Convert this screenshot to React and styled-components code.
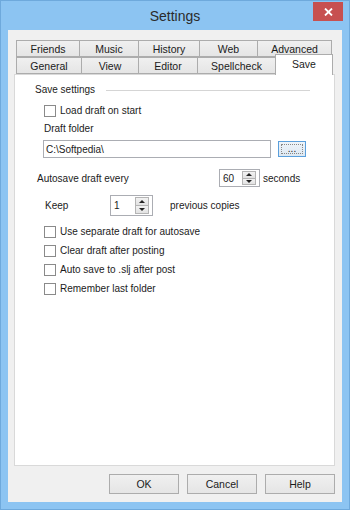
import React from "react"
import styled, { createGlobalStyle } from "styled-components"

const GlobalStyle = createGlobalStyle`
    html, body {
        margin: 0;
        padding: 0;
        background: #8cc4f2;
    }
    body {
        font-family: "Liberation Sans", Arial, sans-serif;
        font-size: 10px;
        color: #1b1b1b;
    }
`

const Window = styled.div`
    width: 350px;
    height: 510px;
    box-sizing: border-box;
    background: #8cc4f2;
    border: 1px solid #6ea9dc;
    display: flex;
    flex-direction: column;
`

const TitleBar = styled.div`
    position: relative;
    height: 29px;
    display: flex;
    align-items: center;
    justify-content: center;
`

const Title = styled.div`
    font-size: 14px;
    color: #2b2b2b;
    margin-top: 1px;
`

const CloseButton = styled.div`
    position: absolute;
    top: 1px;
    right: 6px;
    width: 30px;
    height: 19px;
    background: #c75050;
    display: flex;
    align-items: center;
    justify-content: center;
`

const Client = styled.div`
    flex: 1;
    margin: 0 7px 7px 7px;
    background: #f0f0f0;
    padding: 10px 6px 0 6px;
    display: flex;
    flex-direction: column;
`

const TabStrip = styled.div`
    width: 321px;
    display: flex;
    flex-direction: column;
`

const TabRow = styled.div`
    height: 17px;
    display: flex;
    align-items: flex-end;
    padding-left: 2px;
`

const Tab = styled.div`
    box-sizing: border-box;
    width: ${p => p.$w}px;
    height: ${p => (p.$active ? 21 : 17)}px;
    margin-right: -1px;
    margin-bottom: ${p => (p.$active ? -1 : 0)}px;
    border: 1px solid #acacac;
    border-bottom: ${p => (p.$active ? "none" : "1px solid #acacac")};
    background: ${p => (p.$active ? "#fff" : "linear-gradient(#f0f0f0, #e5e5e5)")};
    position: relative;
    z-index: ${p => (p.$active ? 2 : 1)};
    display: flex;
    align-items: ${p => (p.$active ? "flex-start" : "center")};
    padding-top: ${p => (p.$active ? 3 : 0)}px;
    justify-content: center;
    font-size: 10.5px;
    color: #1b1b1b;
`

const Panel = styled.div`
    box-sizing: border-box;
    width: 321px;
    height: 392px;
    background: #fff;
    border: 1px solid #d9d9d9;
    display: flex;
    flex-direction: column;
`

const HeaderRow = styled.div`
    height: 14px;
    margin-top: 7px;
    padding: 0 24px 0 20px;
    display: flex;
    align-items: center;
    gap: 11px;
`

const HeaderLine = styled.div`
    flex: 1;
    height: 1px;
    background: #d5d5d5;
    margin-top: 2px;
`

const CheckRow = styled.label`
    height: ${p => p.$h || 15}px;
    margin-top: ${p => p.$mt || 0}px;
    padding-left: 29px;
    display: flex;
    align-items: center;
    gap: 4px;
`

const CheckBox = styled.span`
    box-sizing: border-box;
    width: 12px;
    height: 12px;
    border: 1px solid #8a8a8a;
    background: #fff;
`

const Label = styled.div`
    height: 14px;
    margin-top: ${p => p.$mt}px;
    padding-left: ${p => p.$pl}px;
    display: flex;
    align-items: center;
`

const FieldRow = styled.div`
    height: ${p => p.$h}px;
    margin-top: ${p => p.$mt}px;
    padding-left: ${p => p.$pl}px;
    display: flex;
    align-items: center;
`

const TextInput = styled.div`
    box-sizing: border-box;
    width: 228px;
    height: 18px;
    border: 1px solid #abadb3;
    background: #fff;
    padding-left: 2px;
    display: flex;
    align-items: center;
`

const BrowseButton = styled.div`
    box-sizing: border-box;
    width: 28px;
    height: 16px;
    margin-left: 7px;
    border: 1px solid #5a9fdc;
    background: linear-gradient(#eef4fa, #dde8f2);
    padding: 2px;
    display: flex;
`

const FocusRect = styled.div`
    flex: 1;
    border: 1px dotted #888;
    display: flex;
    align-items: flex-end;
    justify-content: center;
    line-height: 8px;
    font-size: 10px;
`

const FixedText = styled.div`
    width: ${p => p.$w}px;
`

const SpinBox = styled.div`
    box-sizing: border-box;
    width: ${p => p.$w}px;
    height: ${p => p.$h}px;
    border: 1px solid #abadb3;
    background: #fff;
    display: flex;
    align-items: center;
    padding: 1px 3px 1px 3px;
`

const SpinValue = styled.div`
    flex: 1;
`

const SpinButtons = styled.div`
    width: 14px;
    height: 100%;
    display: flex;
    flex-direction: column;
`

const SpinHalf = styled.div`
    flex: 1;
    box-sizing: border-box;
    border: 1px solid #b4b4b4;
    margin-top: ${p => (p.$down ? -1 : 0)}px;
    background: linear-gradient(#f2f2f2, #e2e2e2);
    display: flex;
    align-items: center;
    justify-content: center;
`

const Arrow = styled.span`
    width: 0;
    height: 0;
    border-left: 3px solid transparent;
    border-right: 3px solid transparent;
    ${p => (p.$down ? "border-top: 3px solid #222;" : "border-bottom: 3px solid #222;")}
`

const AfterText = styled.div`
    margin-left: ${p => p.$ml}px;
`

const ButtonRow = styled.div`
    width: 321px;
    margin-top: 8px;
    display: flex;
    justify-content: flex-end;
    gap: 8px;
`

const DialogButton = styled.div`
    box-sizing: border-box;
    width: 70px;
    height: 20px;
    border: 1px solid #acacac;
    background: linear-gradient(#f0f0f0, #e5e5e5);
    display: flex;
    align-items: center;
    justify-content: center;
    font-size: 10.5px;
`

const Spinner = ({ value, w, h }) => (
    <SpinBox $w={w} $h={h}>
        <SpinValue>{value}</SpinValue>
        <SpinButtons>
            <SpinHalf><Arrow /></SpinHalf>
            <SpinHalf $down><Arrow $down /></SpinHalf>
        </SpinButtons>
    </SpinBox>
)

const row1 = [
    { name: "Friends", w: 64 },
    { name: "Music", w: 60 },
    { name: "History", w: 62 },
    { name: "Web", w: 59 },
    { name: "Advanced", w: 75 },
]

const row2 = [
    { name: "General", w: 66 },
    { name: "View", w: 58 },
    { name: "Editor", w: 60 },
    { name: "Spellcheck", w: 79 },
    { name: "Save", w: 58, active: true },
]

const options = [
    "Use separate draft for autosave",
    "Clear draft after posting",
    "Auto save to .slj after post",
    "Remember last folder",
]

const App = () => {
    return (
        <>
            <GlobalStyle />
            <Window>
                <TitleBar>
                    <Title>Settings</Title>
                    <CloseButton>
                        <svg width="9" height="8" viewBox="0 0 9 8">
                            <path d="M1 0.5 L8 7.5 M8 0.5 L1 7.5" stroke="#fff" strokeWidth="1.8" />
                        </svg>
                    </CloseButton>
                </TitleBar>
                <Client>
                    <TabStrip>
                        <TabRow>
                            {row1.map(t => (
                                <Tab key={t.name} $w={t.w}>{t.name}</Tab>
                            ))}
                        </TabRow>
                        <TabRow>
                            {row2.map(t => (
                                <Tab key={t.name} $w={t.w} $active={t.active}>{t.name}</Tab>
                            ))}
                        </TabRow>
                    </TabStrip>
                    <Panel>
                        <HeaderRow>
                            <span>Save settings</span>
                            <HeaderLine />
                        </HeaderRow>
                        <CheckRow $mt={7}>
                            <CheckBox />
                            Load draft on start
                        </CheckRow>
                        <Label $mt={3} $pl={29}>Draft folder</Label>
                        <FieldRow $h={18} $mt={5} $pl={28}>
                            <TextInput>C:\Softpedia\</TextInput>
                            <BrowseButton>
                                <FocusRect>...</FocusRect>
                            </BrowseButton>
                        </FieldRow>
                        <FieldRow $h={18} $mt={11} $pl={22}>
                            <FixedText $w={182}>Autosave draft every</FixedText>
                            <Spinner value="60" w={41} h={18} />
                            <AfterText $ml={3}>seconds</AfterText>
                        </FieldRow>
                        <FieldRow $h={21} $mt={8} $pl={30}>
                            <FixedText $w={65}>Keep</FixedText>
                            <Spinner value="1" w={43} h={21} />
                            <AfterText $ml={17}>previous copies</AfterText>
                        </FieldRow>
                        {options.map((o, i) => (
                            <CheckRow key={o} $h={19} $mt={i === 0 ? 6 : 0}>
                                <CheckBox />
                                {o}
                            </CheckRow>
                        ))}
                    </Panel>
                    <ButtonRow>
                        <DialogButton>OK</DialogButton>
                        <DialogButton>Cancel</DialogButton>
                        <DialogButton>Help</DialogButton>
                    </ButtonRow>
                </Client>
            </Window>
        </>
    )
}

export default App
